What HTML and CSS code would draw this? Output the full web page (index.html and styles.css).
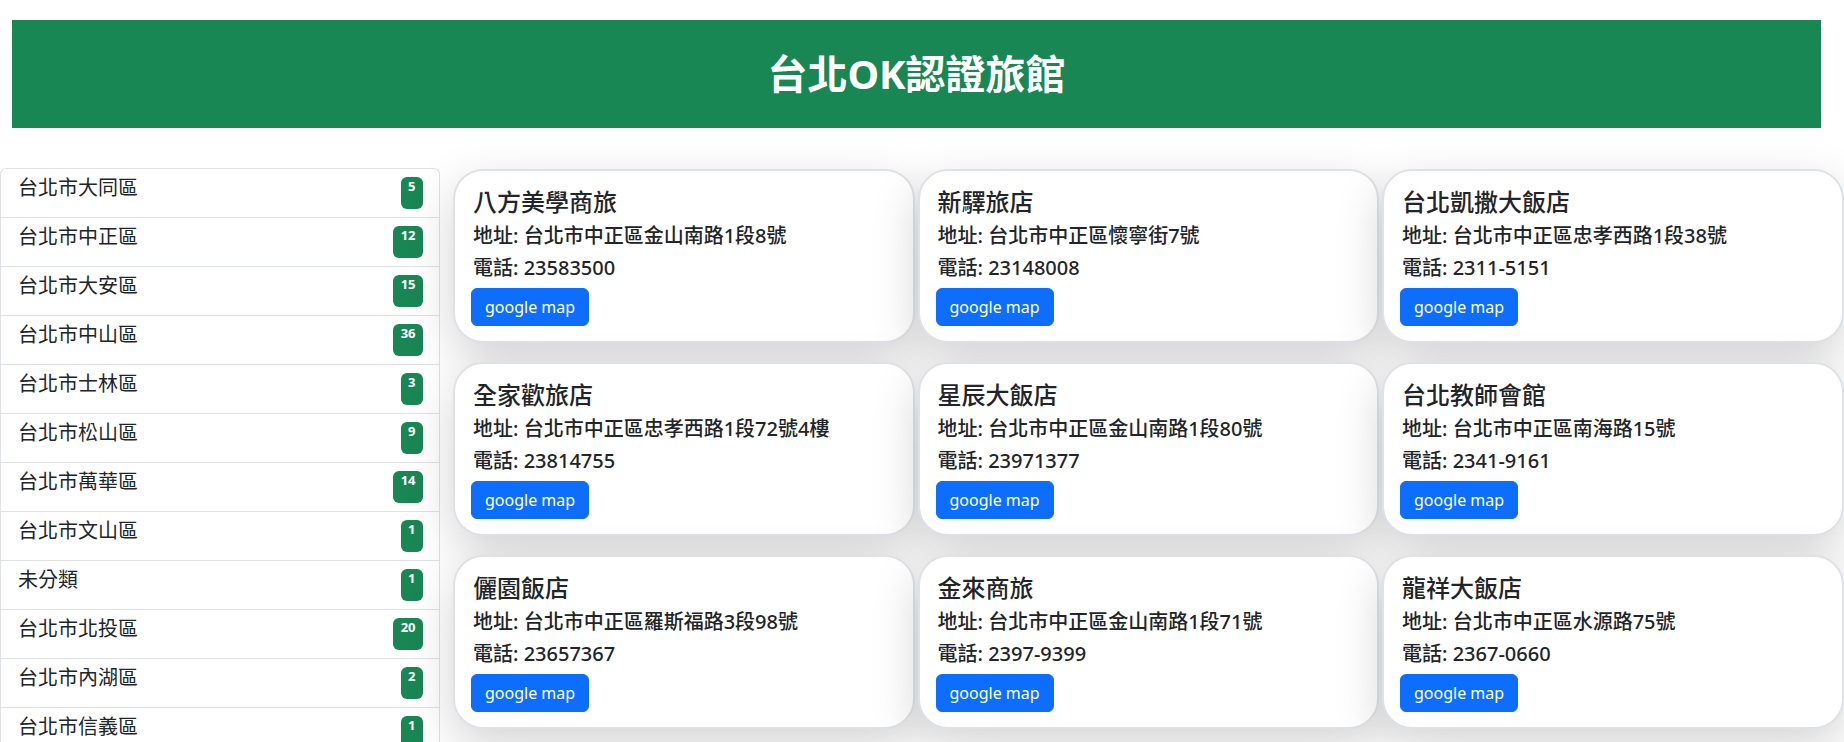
FILE: index.html
```html
<!DOCTYPE html>
<html lang="zh-Hant">
<head>
<meta charset="utf-8">
<title>台北OK認證旅館</title>
<link rel="stylesheet" href="styles.css">
</head>
<body>
<header class="banner"><h1 class="banner-title">台北OK認證旅館</h1></header>
<div class="layout">
  <ul class="districts">
    <li class="district"><span class="district-name">台北市大同區</span><span class="badge">5</span></li>
    <li class="district"><span class="district-name">台北市中正區</span><span class="badge">12</span></li>
    <li class="district"><span class="district-name">台北市大安區</span><span class="badge">15</span></li>
    <li class="district"><span class="district-name">台北市中山區</span><span class="badge">36</span></li>
    <li class="district"><span class="district-name">台北市士林區</span><span class="badge">3</span></li>
    <li class="district"><span class="district-name">台北市松山區</span><span class="badge">9</span></li>
    <li class="district"><span class="district-name">台北市萬華區</span><span class="badge">14</span></li>
    <li class="district"><span class="district-name">台北市文山區</span><span class="badge">1</span></li>
    <li class="district"><span class="district-name">未分類</span><span class="badge">1</span></li>
    <li class="district"><span class="district-name">台北市北投區</span><span class="badge">20</span></li>
    <li class="district"><span class="district-name">台北市內湖區</span><span class="badge">2</span></li>
    <li class="district"><span class="district-name">台北市信義區</span><span class="badge">1</span></li>
  </ul>
  <main class="hotels">
    <div class="card"><h4 class="card-title">八方美學商旅</h4><p class="card-line">地址: 台北市中正區金山南路1段8號</p><p class="card-line">電話: 23583500</p><a class="btn" href="#">google map</a></div>
    <div class="card"><h4 class="card-title">新驛旅店</h4><p class="card-line">地址: 台北市中正區懷寧街7號</p><p class="card-line">電話: 23148008</p><a class="btn" href="#">google map</a></div>
    <div class="card"><h4 class="card-title">台北凱撒大飯店</h4><p class="card-line">地址: 台北市中正區忠孝西路1段38號</p><p class="card-line">電話: 2311-5151</p><a class="btn" href="#">google map</a></div>
    <div class="card"><h4 class="card-title">全家歡旅店</h4><p class="card-line">地址: 台北市中正區忠孝西路1段72號4樓</p><p class="card-line">電話: 23814755</p><a class="btn" href="#">google map</a></div>
    <div class="card"><h4 class="card-title">星辰大飯店</h4><p class="card-line">地址: 台北市中正區金山南路1段80號</p><p class="card-line">電話: 23971377</p><a class="btn" href="#">google map</a></div>
    <div class="card"><h4 class="card-title">台北教師會館</h4><p class="card-line">地址: 台北市中正區南海路15號</p><p class="card-line">電話: 2341-9161</p><a class="btn" href="#">google map</a></div>
    <div class="card"><h4 class="card-title">儷園飯店</h4><p class="card-line">地址: 台北市中正區羅斯福路3段98號</p><p class="card-line">電話: 23657367</p><a class="btn" href="#">google map</a></div>
    <div class="card"><h4 class="card-title">金來商旅</h4><p class="card-line">地址: 台北市中正區金山南路1段71號</p><p class="card-line">電話: 2397-9399</p><a class="btn" href="#">google map</a></div>
    <div class="card"><h4 class="card-title">龍祥大飯店</h4><p class="card-line">地址: 台北市中正區水源路75號</p><p class="card-line">電話: 2367-0660</p><a class="btn" href="#">google map</a></div>
  </main>
</div>
</body>
</html>
```
FILE: styles.css
```css
* { box-sizing: border-box; }
html, body {
  margin: 0;
  padding: 0;
  background: #fff;
  color: #212529;
  font-family: "Noto Sans", "Noto Sans CJK TC", sans-serif;
  overflow-x: hidden;
}
.banner {
  margin: 20px 23px 0 12px;
  height: 108px;
  background: #198754;
  display: flex;
  align-items: center;
  justify-content: center;
}
.banner-title {
  margin: 0;
  color: #fff;
  font-size: 40px;
  font-weight: 700;
  line-height: 1.2;
}
.layout {
  display: flex;
  align-items: flex-start;
  margin-top: 40px;
  gap: 13px;
}
.districts {
  list-style: none;
  margin: 0;
  padding: 0;
  width: 440px;
  flex-shrink: 0;
  border: 1px solid #dee2e6;
  border-bottom: 0;
  border-radius: 6px 6px 0 0;
  background: #fff;
}
.district {
  display: flex;
  justify-content: space-between;
  align-items: flex-start;
  padding: 8px 16px;
  border-bottom: 1px solid #dee2e6;
}
.district-name {
  font-size: 20px;
  line-height: 20px;
  padding-left: 1px;
  font-family: "Noto Sans CJK TC", sans-serif;
  color: #212529;
}
.badge {
  height: 32px;
  padding: 3px 7.5px 0;
  background: #198754;
  color: #fff;
  font-size: 13px;
  font-weight: 700;
  line-height: 13px;
  border-radius: 6px;
}
.hotels {
  flex: 1;
  padding-top: 1px;
  display: grid;
  grid-template-columns: repeat(3, 461.5px);
  column-gap: 3px;
  row-gap: 19px;
}
.card {
  background: #fff;
  border: 2px solid #dee2e6;
  border-radius: 30px;
  padding: 16px 16px 15px;
  box-shadow: 0 16px 48px rgba(0, 0, 0, 0.175);
}
.card-title {
  margin: 0 0 5px;
  font-size: 24px;
  line-height: 29px;
  font-weight: 500;
  padding-left: 2px;
}
.card-line {
  margin: 0 0 2px;
  font-size: 20px;
  line-height: 30px;
  font-weight: 500;
  padding-left: 2px;
}
.card-line + .card-line { margin-bottom: 5px; }
.btn {
  display: inline-block;
  height: 38px;
  padding: 6px 13px;
  background: #0d6efd;
  border: 1px solid #0d6efd;
  border-radius: 6px;
  color: #fff;
  font-size: 16px;
  line-height: 24px;
  text-decoration: none;
}
```
